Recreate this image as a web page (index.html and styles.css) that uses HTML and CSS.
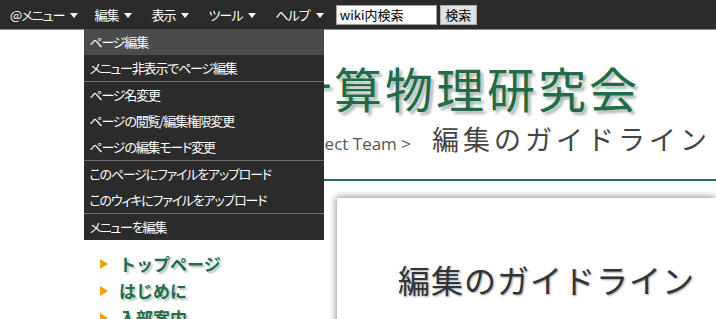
FILE: index.html
```html
<!DOCTYPE html>
<html lang="ja">
<head>
    <meta charset="UTF-8">
    <title>編集のガイドライン</title>
    <link rel="stylesheet" href="styles.css">
</head>
<body>
    <div class="topbar">
        <ul class="menubar">
            <li class="menu-item">@メニュー<span class="tri"></span></li>
            <li class="menu-item open">編集<span class="tri"></span>
                <ul class="dropdown">
                    <li class="hover">ページ編集</li>
                    <li>メニュー非表示でページ編集</li>
                    <li class="sep">ページ名変更</li>
                    <li>ページの閲覧/編集権限変更</li>
                    <li>ページの編集モード変更</li>
                    <li class="sep">このページにファイルをアップロード</li>
                    <li>このウィキにファイルをアップロード</li>
                    <li class="sep">メニューを編集</li>
                </ul>
            </li>
            <li class="menu-item">表示<span class="tri"></span></li>
            <li class="menu-item">ツール<span class="tri"></span></li>
            <li class="menu-item">ヘルプ<span class="tri"></span></li>
        </ul>
        <form class="search">
            <input type="text" class="search-box" value="wiki内検索">
            <button type="button" class="search-btn">検索</button>
        </form>
    </div>

    <div class="header">
        <h1 class="site-title">東工大計算物理研究会</h1>
        <div class="breadcrumb">
            <span class="crumb">Top &gt; Physics Project Team &gt;</span>
            <span class="current">編集のガイドライン</span>
        </div>
    </div>

    <div class="main">
        <div class="sidebar">
            <ul class="side-nav">
                <li>トップページ</li>
                <li>はじめに</li>
                <li>入部案内</li>
            </ul>
        </div>
        <div class="card">
            <h2 class="page-title">編集のガイドライン</h2>
        </div>
    </div>
</body>
</html>
```

FILE: styles.css
```css
body {
    margin: 0;
    background-color: #ffffff;
    font-family: "Noto Sans CJK JP", sans-serif;
    overflow: hidden;
}
ul {
    list-style: none;
    margin: 0;
    padding: 0;
}

/* barra superior */
.topbar {
    display: flex;
    align-items: center;
    height: 29px;
    background-color: #2b2b2b;
    border-bottom: 1px solid #8a8a8a;
    position: relative;
    z-index: 10;
    font-feature-settings: "palt";
}
.menubar {
    display: flex;
    height: 29px;
}
.menu-item {
    position: relative;
    display: flex;
    align-items: center;
    padding: 0 9px 0 10px;
    color: #ffffff;
    font-size: 13px;
    letter-spacing: -1px;
}
.menu-item:first-child {
    padding-right: 6px;
}
.tri {
    width: 0;
    height: 0;
    margin-left: 6px;
    margin-top: 2px;
    border-left: 4px solid transparent;
    border-right: 4px solid transparent;
    border-top: 5px solid #ffffff;
}
.dropdown {
    position: absolute;
    left: 0;
    top: 29px;
    width: 240px;
    background-color: #2b2b2b;
    letter-spacing: -1.2px;
}
.dropdown li {
    height: 26px;
    line-height: 26px;
    padding-left: 5px;
    font-size: 13px;
    color: #ffffff;
    white-space: nowrap;
}
.dropdown li.hover {
    background-color: #4b4b4b;
}
.dropdown li.sep {
    border-top: 1px solid #6e6e6e;
}
.search {
    display: flex;
    margin-left: 3px;
}
.search-box {
    width: 101px;
    height: 20px;
    box-sizing: border-box;
    border: 1px solid #a0a0a0;
    padding: 0 3px;
    font-family: "Noto Sans CJK JP", sans-serif;
    font-size: 13px;
    color: #000000;
}
.search-btn {
    width: 37px;
    height: 20px;
    margin-left: 3px;
    padding: 0;
    border: 1px solid #adadad;
    background-color: #e1e1e1;
    font-family: "Noto Sans CJK JP", sans-serif;
    font-size: 13px;
    line-height: 16px;
}

/* cabecera */
.header {
    margin-left: 130px;
    padding-top: 25px;
    border-bottom: 2px solid #2f6a4c;
}
.site-title {
    margin: 0;
    height: 64px;
    font-size: 48px;
    font-weight: normal;
    letter-spacing: 3px;
    line-height: 64px;
    color: #236b47;
    text-shadow: 3px 3px 3px #a9b9b0;
    white-space: nowrap;
}
.breadcrumb {
    display: flex;
    align-items: baseline;
    height: 60px;
    white-space: nowrap;
}
.crumb {
    display: inline-block;
    width: 281px;
    text-align: right;
    font-family: "Open Sans", sans-serif;
    font-size: 17px;
    color: #555555;
    margin-right: 21px;
}
.current {
    font-size: 27px;
    letter-spacing: 4px;
    color: #444444;
}

/* contenido */
.main {
    display: flex;
}
.sidebar {
    width: 337px;
    flex-shrink: 0;
    padding-top: 69px;
}
.side-nav {
    padding-left: 100px;
}
.side-nav li {
    display: flex;
    align-items: center;
    height: 27px;
    font-size: 17px;
    font-weight: bold;
    color: #236b47;
    text-shadow: 2px 2px 2px #b5c3bc;
}
.side-nav li::before {
    content: "";
    width: 0;
    height: 0;
    margin-right: 11px;
    border-top: 5px solid transparent;
    border-bottom: 5px solid transparent;
    border-left: 8px solid #f5a00f;
}
.card {
    flex: 1;
    margin-top: 17px;
    height: 300px;
    background-color: #ffffff;
    box-shadow: -1px -1px 7px rgba(0, 0, 0, 0.45);
    padding: 58px 0 0 61px;
}
.page-title {
    margin: 0;
    font-size: 32px;
    font-weight: normal;
    letter-spacing: 1px;
    color: #333333;
    text-shadow: 1px 1px 2px #9aa3b0;
    white-space: nowrap;
}
```
